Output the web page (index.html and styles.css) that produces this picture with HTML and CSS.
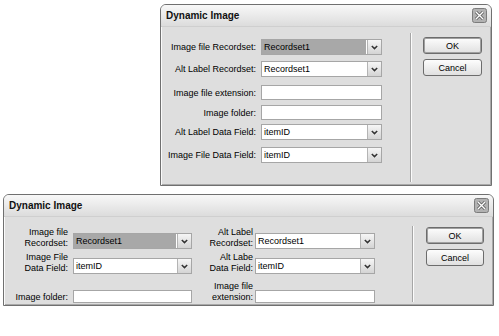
FILE: index.html
```html
<!DOCTYPE html>
<html lang="en">
<head>
    <meta charset="UTF-8">
    <meta name="viewport" content="width=device-width, initial-scale=1.0">
    <title>Dynamic Image</title>
    <link rel="stylesheet" href="styles.css">
</head>
<body>
    <div class="dialog dialog-tall">
        <div class="titlebar">
            <span class="title">Dynamic Image</span>
            <svg class="close" width="15" height="15" viewBox="0 0 15 15"><rect x="0.5" y="0.5" width="14" height="14" rx="2" fill="#b2b2b2" stroke="#7c7c7c"/><path d="M4 4 L11 11 M11 4 L4 11" stroke="#5a5a5a" stroke-width="3"/><path d="M4 4 L11 11 M11 4 L4 11" stroke="#fff" stroke-width="1.4"/></svg>
        </div>
        <div class="content">
            <div class="fields fields-list">
                <label class="lbl">Image file Recordset:</label>
                <div class="select is-active"><span class="value">Recordset1</span><span class="arrow"><svg width="7" height="5" viewBox="0 0 7 5"><path d="M0.8 1 L3.5 3.6 L6.2 1" fill="none" stroke="#333" stroke-width="1.5"/></svg></span></div>

                <label class="lbl">Alt Label Recordset:</label>
                <div class="select"><span class="value">Recordset1</span><span class="arrow"><svg width="7" height="5" viewBox="0 0 7 5"><path d="M0.8 1 L3.5 3.6 L6.2 1" fill="none" stroke="#333" stroke-width="1.5"/></svg></span></div>

                <label class="lbl">Image file extension:</label>
                <input class="field" type="text">

                <label class="lbl">Image folder:</label>
                <input class="field" type="text">

                <label class="lbl">Alt Label Data Field:</label>
                <div class="select"><span class="value">itemID</span><span class="arrow"><svg width="7" height="5" viewBox="0 0 7 5"><path d="M0.8 1 L3.5 3.6 L6.2 1" fill="none" stroke="#333" stroke-width="1.5"/></svg></span></div>

                <label class="lbl">Image File Data Field:</label>
                <div class="select"><span class="value">itemID</span><span class="arrow"><svg width="7" height="5" viewBox="0 0 7 5"><path d="M0.8 1 L3.5 3.6 L6.2 1" fill="none" stroke="#333" stroke-width="1.5"/></svg></span></div>
            </div>
            <div class="divider"></div>
            <div class="actions">
                <button class="btn btn-default">OK</button>
                <button class="btn">Cancel</button>
            </div>
        </div>
    </div>

    <div class="dialog dialog-wide">
        <div class="titlebar">
            <span class="title">Dynamic Image</span>
            <svg class="close" width="15" height="15" viewBox="0 0 15 15"><rect x="0.5" y="0.5" width="14" height="14" rx="2" fill="#b2b2b2" stroke="#7c7c7c"/><path d="M4 4 L11 11 M11 4 L4 11" stroke="#5a5a5a" stroke-width="3"/><path d="M4 4 L11 11 M11 4 L4 11" stroke="#fff" stroke-width="1.4"/></svg>
        </div>
        <div class="content">
            <div class="fields fields-grid">
                <label class="lbl lbl-a">Image file<br>Recordset:</label>
                <div class="select is-active"><span class="value">Recordset1</span><span class="arrow"><svg width="7" height="5" viewBox="0 0 7 5"><path d="M0.8 1 L3.5 3.6 L6.2 1" fill="none" stroke="#333" stroke-width="1.5"/></svg></span></div>
                <label class="lbl lbl-b">Alt Label<br>Recordset:</label>
                <div class="select"><span class="value">Recordset1</span><span class="arrow"><svg width="7" height="5" viewBox="0 0 7 5"><path d="M0.8 1 L3.5 3.6 L6.2 1" fill="none" stroke="#333" stroke-width="1.5"/></svg></span></div>

                <label class="lbl lbl-a">Image File<br>Data Field:</label>
                <div class="select"><span class="value">itemID</span><span class="arrow"><svg width="7" height="5" viewBox="0 0 7 5"><path d="M0.8 1 L3.5 3.6 L6.2 1" fill="none" stroke="#333" stroke-width="1.5"/></svg></span></div>
                <label class="lbl lbl-b">Alt Labe<br>Data Field:</label>
                <div class="select"><span class="value">itemID</span><span class="arrow"><svg width="7" height="5" viewBox="0 0 7 5"><path d="M0.8 1 L3.5 3.6 L6.2 1" fill="none" stroke="#333" stroke-width="1.5"/></svg></span></div>

                <label class="lbl lbl-a">Image folder:</label>
                <input class="field field-small" type="text">
                <label class="lbl lbl-b">Image file<br>extension:</label>
                <input class="field field-small" type="text">
            </div>
            <div class="divider"></div>
            <div class="actions">
                <button class="btn btn-default">OK</button>
                <button class="btn">Cancel</button>
            </div>
        </div>
    </div>
</body>
</html>
```

FILE: styles.css
```css
* {
    box-sizing: border-box;
}
body {
    margin: 0;
    background-color: #ffffff;
    font-family: "Liberation Sans", Arial, sans-serif;
    font-size: 9px;
    color: #000000;
}
.dialog {
    background-color: #dedede;
    border: 1px solid #707070;
    border-radius: 6px 6px 0 0;
    box-shadow: inset 1px 0 0 #fafafa, inset -1px -1px 0 #a9a9a9;
    overflow: hidden;
}
.dialog-tall {
    width: 332px;
    height: 182px;
    margin: 4px 0 0 160px;
}
.dialog-wide {
    width: 491px;
    height: 112px;
    margin: 8px 0 0 3px;
}
.titlebar {
    height: 22px;
    display: flex;
    align-items: center;
    justify-content: space-between;
    padding: 0 4px 0 5px;
    background: linear-gradient(#f8f8f8, #dcdcdc);
    border-bottom: 1px solid #cfcfcf;
}
.title {
    font-size: 10px;
    font-weight: bold;
    color: #111111;
}
.close {
    display: block;
}
.content {
    display: flex;
    height: calc(100% - 22px);
}
.fields {
    display: grid;
}
.fields-list {
    grid-template-columns: 90px 121px;
    grid-template-rows: 22px 24px 20px 19px 23px 23px;
    column-gap: 5px;
    align-items: start;
    padding: 12px 28px 0 5px;
}
.fields-list .lbl {
    text-align: right;
    line-height: 16px;
    white-space: nowrap;
}
.fields-grid {
    grid-template-columns: 65px 119px 63px 120px;
    grid-template-rows: 22px 25px 29px;
    align-items: end;
    padding: 10px 37px 0 4px;
}
.fields-grid .lbl {
    text-align: right;
    line-height: 11px;
}
.lbl-a {
    padding-right: 5px;
}
.lbl-b {
    padding-right: 2px;
}
.field {
    width: 121px;
    height: 15px;
    margin: 0;
    padding: 0 2px;
    border: 1px solid #a6a6a6;
    background-color: #ffffff;
    font: inherit;
}
.field-small {
    width: 120px;
    height: 13px;
}
.fields-grid .field-small:nth-of-type(1) {
    width: 119px;
}
.select {
    width: 121px;
    height: 16px;
    display: flex;
    border: 1px solid #a6a6a6;
    background-color: #ffffff;
}
.fields-grid .select {
    width: 100%;
}
.select .value {
    flex: 1;
    padding-left: 2px;
    line-height: 14px;
    margin-right: 1px;
}
.select.is-active .value {
    background-color: #a8a8a8;
}
.select .arrow {
    width: 14px;
    display: flex;
    align-items: center;
    justify-content: center;
    border-left: 1px solid #b4b4b4;
    background: linear-gradient(#f6f6f6, #d4d4d4);
}
.divider {
    width: 2px;
    margin: 6px 0 3px 0;
    border-left: 1px solid #a6a6a6;
    border-right: 1px solid #fbfbfb;
}
.dialog-wide .divider {
    margin-top: 9px;
}
.actions {
    padding: 10px 0 0 11px;
}
.dialog-wide .actions {
    padding-left: 12px;
}
.btn {
    display: block;
    width: 59px;
    height: 17px;
    margin: 0 0 5px 0;
    padding: 0;
    border: 1px solid #6c6c6c;
    border-radius: 3px;
    background: linear-gradient(#fdfdfd, #e0e0e0);
    font: inherit;
    color: #000000;
}
.dialog-wide .btn {
    width: 58px;
}
.btn-default {
    box-shadow: inset 0 0 0 1px #a0a0a0;
}
```
